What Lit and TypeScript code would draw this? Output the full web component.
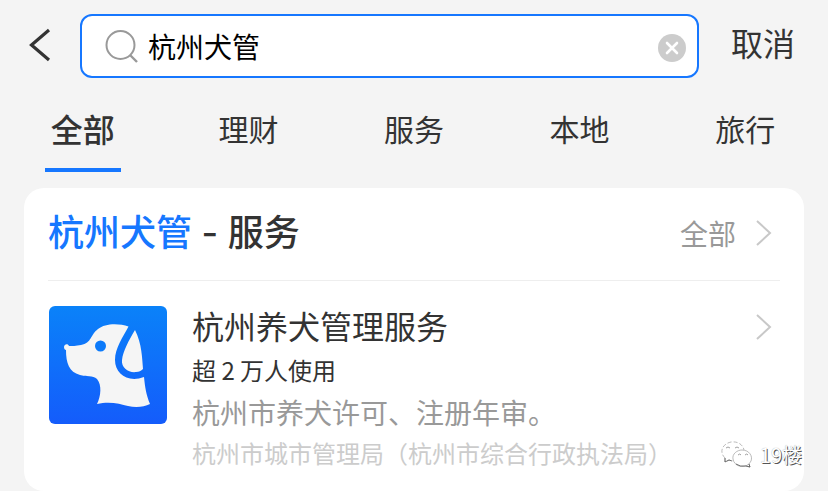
import { LitElement, html, css, svg } from "lit";
import { customElement, state } from "lit/decorators.js";

const chevron = svg`<path d="M1 1 L14 13 L1 25" fill="none" stroke="#c8c8c8" stroke-width="2"/>`;

@customElement("app-root")
export class AppRoot extends LitElement {
  static styles = css`
    :host {
      display: block;
      box-sizing: border-box;
      min-height: 100vh;
      background: #f4f4f4;
      color: #333;
      font-family: "Noto Sans CJK SC", "Noto Sans", sans-serif;
    }
    * { box-sizing: border-box; }
    svg { display: block; flex: none; }
    button {
      border: 0;
      padding: 0;
      background: none;
      font: inherit;
      color: inherit;
      cursor: pointer;
    }
    a { color: inherit; text-decoration: none; }
    h2, h3, p { margin: 0; font-weight: 400; }

    .header {
      display: flex;
      align-items: center;
      padding: 14px 33px 0 28px;
    }
    .back { margin-right: 28px; padding-bottom: 2px; }
    .search {
      flex: 1;
      min-width: 0;
      height: 64px;
      display: flex;
      align-items: center;
      padding: 0 11px 0 22px;
      background: #fff;
      border: 2px solid #1677ff;
      border-radius: 12px;
    }
    .search input {
      flex: 1;
      min-width: 0;
      height: 48px;
      margin-left: 8px;
      padding: 0;
      border: 0;
      outline: 0;
      background: none;
      color: #000;
      font-family: inherit;
      font-size: 28px;
    }
    .clear { padding-top: 4px; }
    .cancel {
      margin-left: 32px;
      padding-bottom: 8px;
      font-size: 32px;
      line-height: 48px;
    }

    .tabs {
      display: grid;
      grid-template-columns: repeat(5, 1fr);
      justify-items: center;
      padding-top: 10px;
    }
    .tab {
      width: 76px;
      height: 84px;
      padding-bottom: 4px;
      font-size: 30px;
      line-height: 80px;
      border-bottom: 4px solid transparent;
    }
    .tab.active {
      font-size: 32px;
      font-weight: 500;
      border-color: #1677ff;
    }

    .card {
      position: relative;
      margin: 16px 24px 0;
      padding: 0 24px 18px;
      background: #fff;
      border-radius: 20px;
    }
    .card-head {
      display: flex;
      align-items: center;
      justify-content: space-between;
      height: 93px;
      padding-bottom: 2px;
      border-bottom: 1px solid #eee;
    }
    .card-head h2 {
      font-family: Inter, "Noto Sans CJK SC", sans-serif;
      font-size: 36px;
      line-height: 48px;
      font-weight: 500;
    }
    .hit { color: #1677ff; }
    .more {
      display: flex;
      align-items: center;
      gap: 20px;
      padding-right: 8px;
      color: #999;
      font-size: 28px;
      line-height: 48px;
    }
    .item {
      display: flex;
      align-items: flex-start;
      gap: 24px;
      padding: 20px 8px 0 0;
    }
    .logo { margin-top: 4px; }
    .info { flex: 1; min-width: 0; }
    .info h3 { font-size: 32px; line-height: 48px; }
    .usage { font-size: 24px; line-height: 42px; }
    .desc { font-size: 28px; line-height: 42px; color: #999; }
    .org { font-size: 24px; line-height: 40px; color: #ccc; }
    .go { margin-top: 13px; }

    .mark {
      position: absolute;
      right: 2px;
      bottom: 21px;
      display: flex;
      align-items: center;
      gap: 7px;
      font-size: 20px;
      line-height: 30px;
      color: #fff;
      text-shadow: 1px 1px 0 #555, 0 0 1px #999;
    }
  `;

  @state() private query = "杭州犬管";
  @state() private active = "全部";

  render() {
    return html`
      <header class="header">
        <button class="back" aria-label="返回">
          <svg width="24" height="36" viewBox="0 0 24 36">
            <path d="M21 3 L3.500 18 L21 33" fill="none" stroke="#333" stroke-width="3.2" />
          </svg>
        </button>
        <div class="search">
          <svg width="36" height="36" viewBox="0 0 36 36" fill="none" stroke="#999" stroke-width="2">
            <circle cx="16.500" cy="17" r="14" />
            <path d="M26 27 L33 34" stroke-width="2.4" />
          </svg>
          <input
            type="text"
            aria-label="搜索"
            .value=${this.query}
            @input=${(e: Event) => (this.query = (e.target as HTMLInputElement).value)}
          />
          <button class="clear" aria-label="清除" @click=${() => (this.query = "")}>
            <svg width="28" height="28" viewBox="0 0 28 28">
              <circle cx="14" cy="14" r="14" fill="#ccc" />
              <path d="M9 9 L19 19 M19 9 L9 19" stroke="#fff" stroke-width="2.6" stroke-linecap="round" />
            </svg>
          </button>
        </div>
        <button class="cancel">取消</button>
      </header>

      <nav class="tabs">
        ${["全部", "理财", "服务", "本地", "旅行"].map(
          (t) => html`<button
            class="tab ${t === this.active ? "active" : ""}"
            @click=${() => (this.active = t)}
          >${t}</button>`
        )}
      </nav>

      <section class="card">
        <div class="card-head">
          <h2><span class="hit">杭州犬管</span> - 服务</h2>
          <a class="more" href="#all">全部<svg width="16" height="26" viewBox="0 0 16 26">${chevron}</svg></a>
        </div>
        <a class="item" href="#service">
          <svg class="logo" width="120" height="120" viewBox="0 0 120 120">
            <defs>
              <linearGradient id="sky" x1="0" y1="0" x2="0" y2="1">
                <stop offset="0" stop-color="#0a82f9" />
                <stop offset="1" stop-color="#145cfb" />
              </linearGradient>
            </defs>
            <rect x="1" y="1" width="118" height="118" rx="6" fill="url(#sky)" />
            <path
              d="M80.500 21.500 C71 18 57 18 50 24 C42 30 44 38 33 40 C28 41 24 41 21 41 C20 38 16 39 16 42 C16 44 17 45 18 45 C18 58 21 67 32 70 C38 72 45 70 49 74 C54 80 53 91 49 99 C62 96 72 99 80 101 C88 103 96 102 102 99 C98 89 97 82 96 72 C80 78 67 69 67 55 C67 43 75 32 80.500 21.500 Z"
              fill="#f5f5f5"
            />
            <path
              d="M87 25 C81 35 75 46 74 55 C73 63 81 68 88 67 C91 67 93 66 95 64 C94 53 94 39 87 25 Z"
              fill="#f5f5f5"
            />
            <circle cx="52.500" cy="41" r="5.500" fill="#0c7afa" />
          </svg>
          <div class="info">
            <h3>杭州养犬管理服务</h3>
            <p class="usage">超 2 万人使用</p>
            <p class="desc">杭州市养犬许可、注册年审。</p>
            <p class="org">杭州市城市管理局（杭州市综合行政执法局）</p>
          </div>
          <svg class="go" width="16" height="26" viewBox="0 0 16 26">${chevron}</svg>
        </a>
        <div class="mark">
          <svg width="32" height="28" viewBox="0 0 32 28" fill="#fff" stroke="#aaa" stroke-width="0.8">
            <path d="M4 17 C-2 11 1 3 10 1 C18 0 23 5 23 10 M4 17 L4 21 L8 19 L12 20" stroke-dasharray="4 2" />
            <path d="M28 23 C22 28 13 25 12 18 C11 13 16 9 21 9 C28 9 32 15 30 20 L28 23 L29 26 L25 25" />
            <path d="M5 7 Q7 5 9 7 M14 7 Q16 5 18 7 M17 14 Q19 12 20 14 M24 14 Q26 12 27 14" fill="none" stroke="#888" />
            <path d="M4 17 L4 21 L8 19 L11 20 M15 23 Q19 26 25 25 L29 26 L28 23" fill="none" stroke="#555" />
          </svg>
          <span>19楼</span>
        </div>
      </section>
    `;
  }
}
